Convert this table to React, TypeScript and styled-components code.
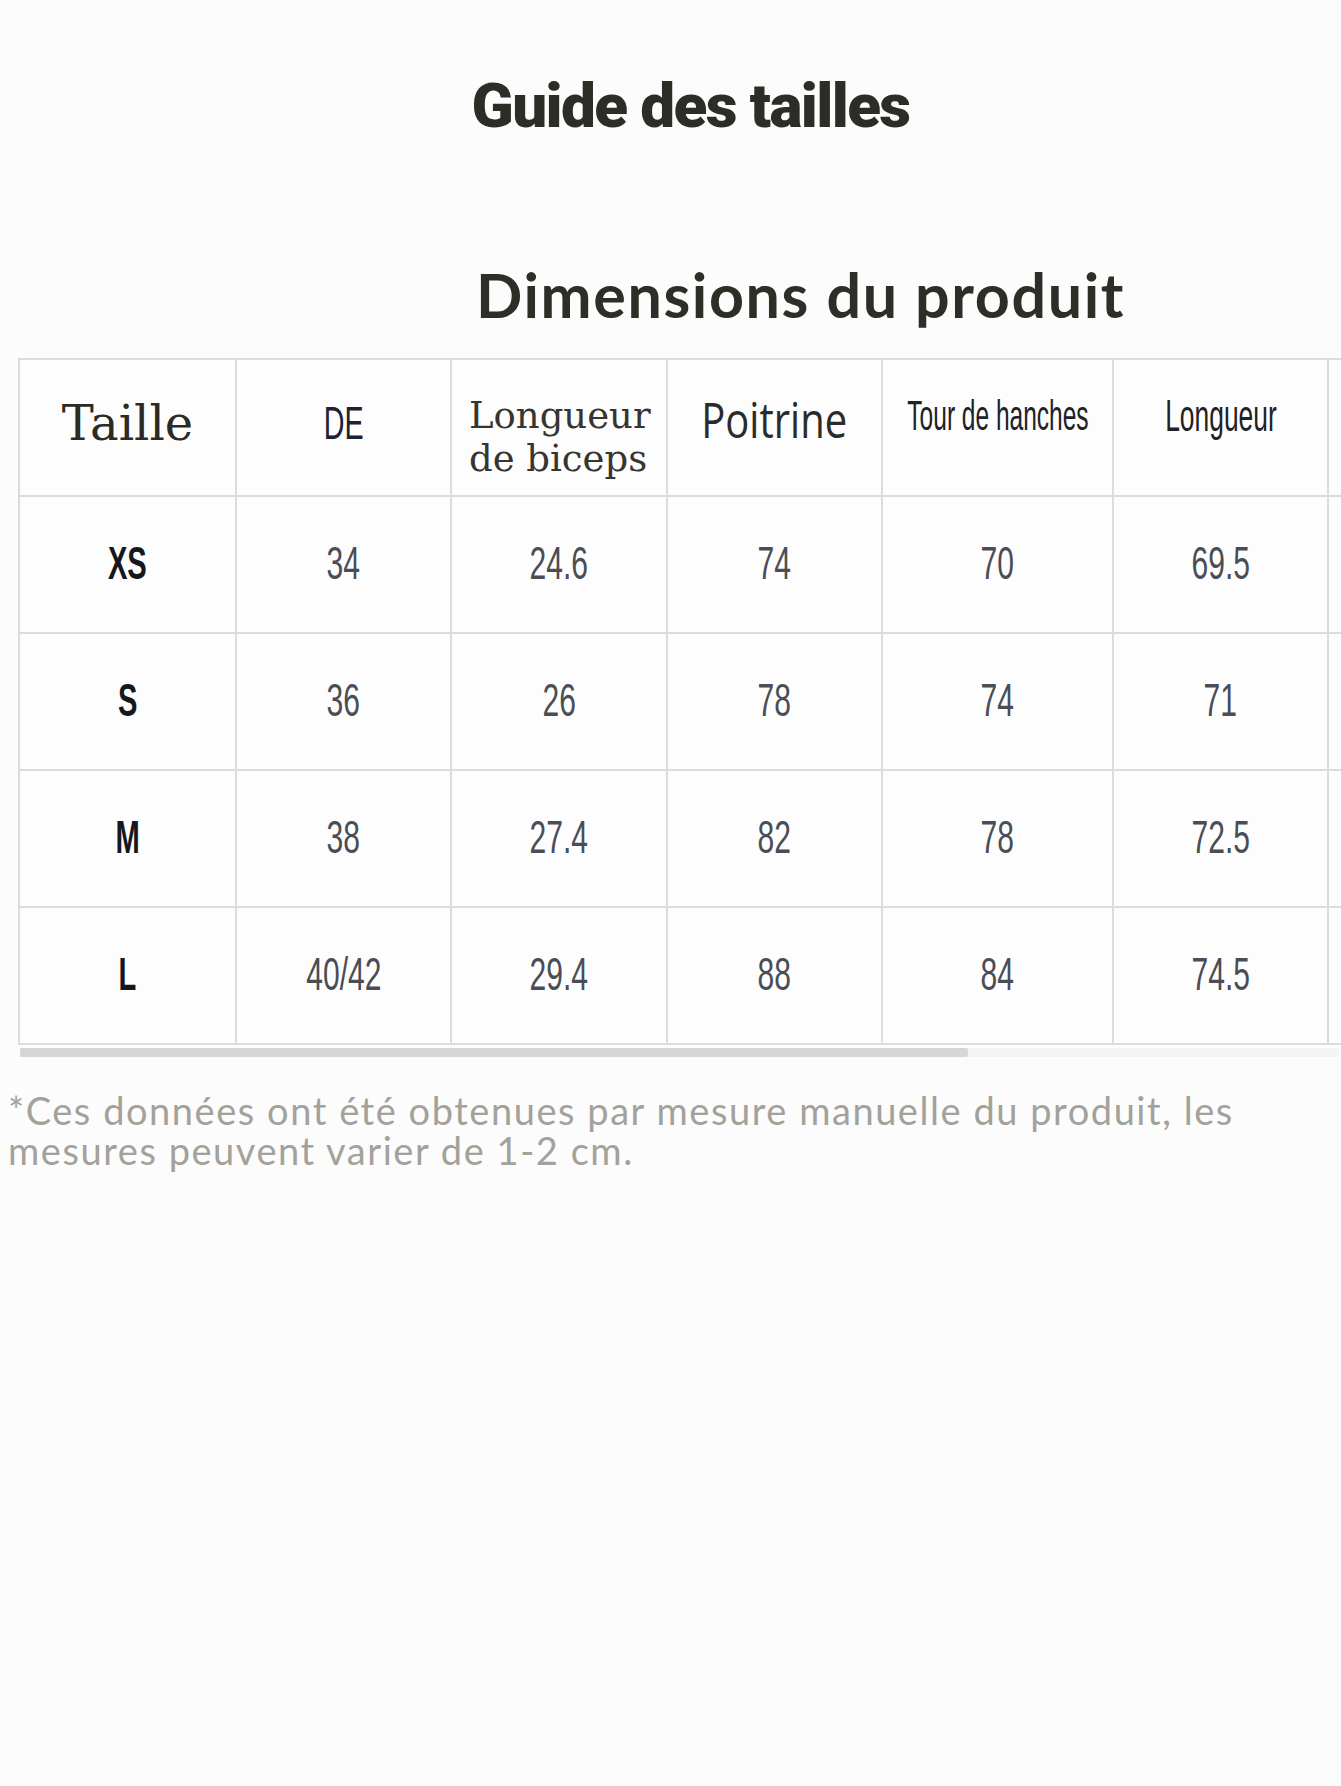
import React from "react";
import styled, { createGlobalStyle } from "styled-components";

const GlobalStyle = createGlobalStyle`
  html, body {
    margin: 0;
    padding: 0;
    background: #fcfcfc;
  }
  body {
    font-family: "Liberation Sans", Arial, sans-serif;
  }
`;

const Page = styled.div`
  width: 1341px;
  min-height: 1786px;
  background: #fcfcfc;
  display: flex;
  flex-direction: column;
  overflow: hidden;
`;

const Title = styled.h1`
  margin: 75px 0 0;
  padding-left: 40px;
  text-align: center;
  font-family: Roboto, "Liberation Sans", sans-serif;
  font-weight: 900;
  font-size: 62px;
  line-height: 62px;
  letter-spacing: -1.6px;
  color: #2d2c26;
`;

const Subtitle = styled.h2`
  margin: 127px 0 0;
  padding-left: 476px;
  font-family: Lato, "Open Sans", sans-serif;
  font-weight: 700;
  font-size: 61px;
  line-height: 61px;
  letter-spacing: 1.6px;
  color: #2e2d27;
  white-space: nowrap;
`;

const TableViewport = styled.div`
  margin: 33px 0 0 18px;
  width: 1323px;
  overflow: hidden;
`;

const Grid = styled.div`
  display: grid;
  grid-template-columns: 215px 213px 214px 213px 229px 213px 1fr;
  grid-auto-rows: 135px;
  gap: 2px;
  padding: 2px 0 2px 2px;
  background: #dcdcdc;
`;

const Cell = styled.div<{ $align?: "center" | "start"; $lift?: number; $drop?: number }>`
  background: #fdfdfd;
  display: flex;
  align-items: center;
  justify-content: ${(p) => (p.$align === "start" ? "flex-start" : "center")};
  padding-left: ${(p) => (p.$align === "start" ? 17 : 0)}px;
  padding-bottom: ${(p) => p.$lift ?? 4}px;
  padding-top: ${(p) => p.$drop ?? 0}px;
  box-sizing: border-box;
  overflow: visible;
  white-space: nowrap;
`;

const Narrow = styled.span<{ $size: number; $scale: number; $weight?: number; $color: string }>`
  display: inline-block;
  font-family: "Liberation Sans", Arial, sans-serif;
  font-size: ${(p) => p.$size}px;
  font-weight: ${(p) => p.$weight ?? 400};
  line-height: 1;
  color: ${(p) => p.$color};
  transform: scaleX(${(p) => p.$scale});
  transform-origin: center;
`;

const SlabHeading = styled.span`
  font-family: "DejaVu Serif", "Liberation Serif", serif;
  font-size: 48px;
  line-height: 1;
  color: #2b2a24;
`;

const StackedHeading = styled.span`
  font-family: "DejaVu Serif", "Liberation Serif", serif;
  font-size: 37px;
  line-height: 43px;
  color: #36352f;
  white-space: normal;
`;

const HumanistHeading = styled.span`
  display: inline-block;
  font-family: "Open Sans", "Noto Sans", sans-serif;
  font-size: 50px;
  line-height: 1;
  color: #2b2b28;
  transform: scaleX(0.8);
`;

const ScrollTrack = styled.div`
  margin: 3px 2px 0 20px;
  height: 9px;
  background: #f4f4f4;
  display: flex;
`;

const ScrollThumb = styled.div`
  width: 948px;
  height: 100%;
  background: #d6d6d6;
  border-radius: 2px;
`;

const Footnote = styled.p`
  margin: 33px 0 0;
  padding: 0 8px;
  font-family: Lato, "Open Sans", sans-serif;
  font-size: 38px;
  line-height: 40px;
  letter-spacing: 1.55px;
  color: #a2a29b;
`;

const rows = [
  ["XS", "34", "24.6", "74", "70", "69.5"],
  ["S", "36", "26", "78", "74", "71"],
  ["M", "38", "27.4", "82", "78", "72.5"],
  ["L", "40/42", "29.4", "88", "84", "74.5"],
];

export default function App() {
  return (
    <>
      <GlobalStyle />
      <Page>
        <Title>Guide des tailles</Title>
        <Subtitle>Dimensions du produit</Subtitle>
        <TableViewport>
          <Grid>
            <Cell $lift={10}>
              <SlabHeading>Taille</SlabHeading>
            </Cell>
            <Cell $lift={10}>
              <Narrow $size={47} $scale={0.61} $color="#1e2130">DE</Narrow>
            </Cell>
            <Cell $align="start" $lift={0} $drop={18}>
              <StackedHeading>
                Longueur
                <br />
                de biceps
              </StackedHeading>
            </Cell>
            <Cell $lift={18}>
              <HumanistHeading>Poitrine</HumanistHeading>
            </Cell>
            <Cell $lift={24}>
              <Narrow $size={43} $scale={0.57} $color="#222226">Tour de hanches</Narrow>
            </Cell>
            <Cell $lift={24}>
              <Narrow $size={44} $scale={0.6} $color="#222226">Longueur</Narrow>
            </Cell>
            <Cell />
            {rows.map((r) => (
              <React.Fragment key={r[0]}>
                <Cell>
                  <Narrow $size={47} $scale={0.62} $weight={700} $color="#15171d">{r[0]}</Narrow>
                </Cell>
                {r.slice(1).map((v, i) => (
                  <Cell key={i}>
                    <Narrow $size={47} $scale={0.64} $color="#4a4d55">{v}</Narrow>
                  </Cell>
                ))}
                <Cell />
              </React.Fragment>
            ))}
          </Grid>
        </TableViewport>
        <ScrollTrack>
          <ScrollThumb />
        </ScrollTrack>
        <Footnote>
          *Ces données ont été obtenues par mesure manuelle du produit, les mesures peuvent varier de 1-2 cm.
        </Footnote>
      </Page>
    </>
  );
}
